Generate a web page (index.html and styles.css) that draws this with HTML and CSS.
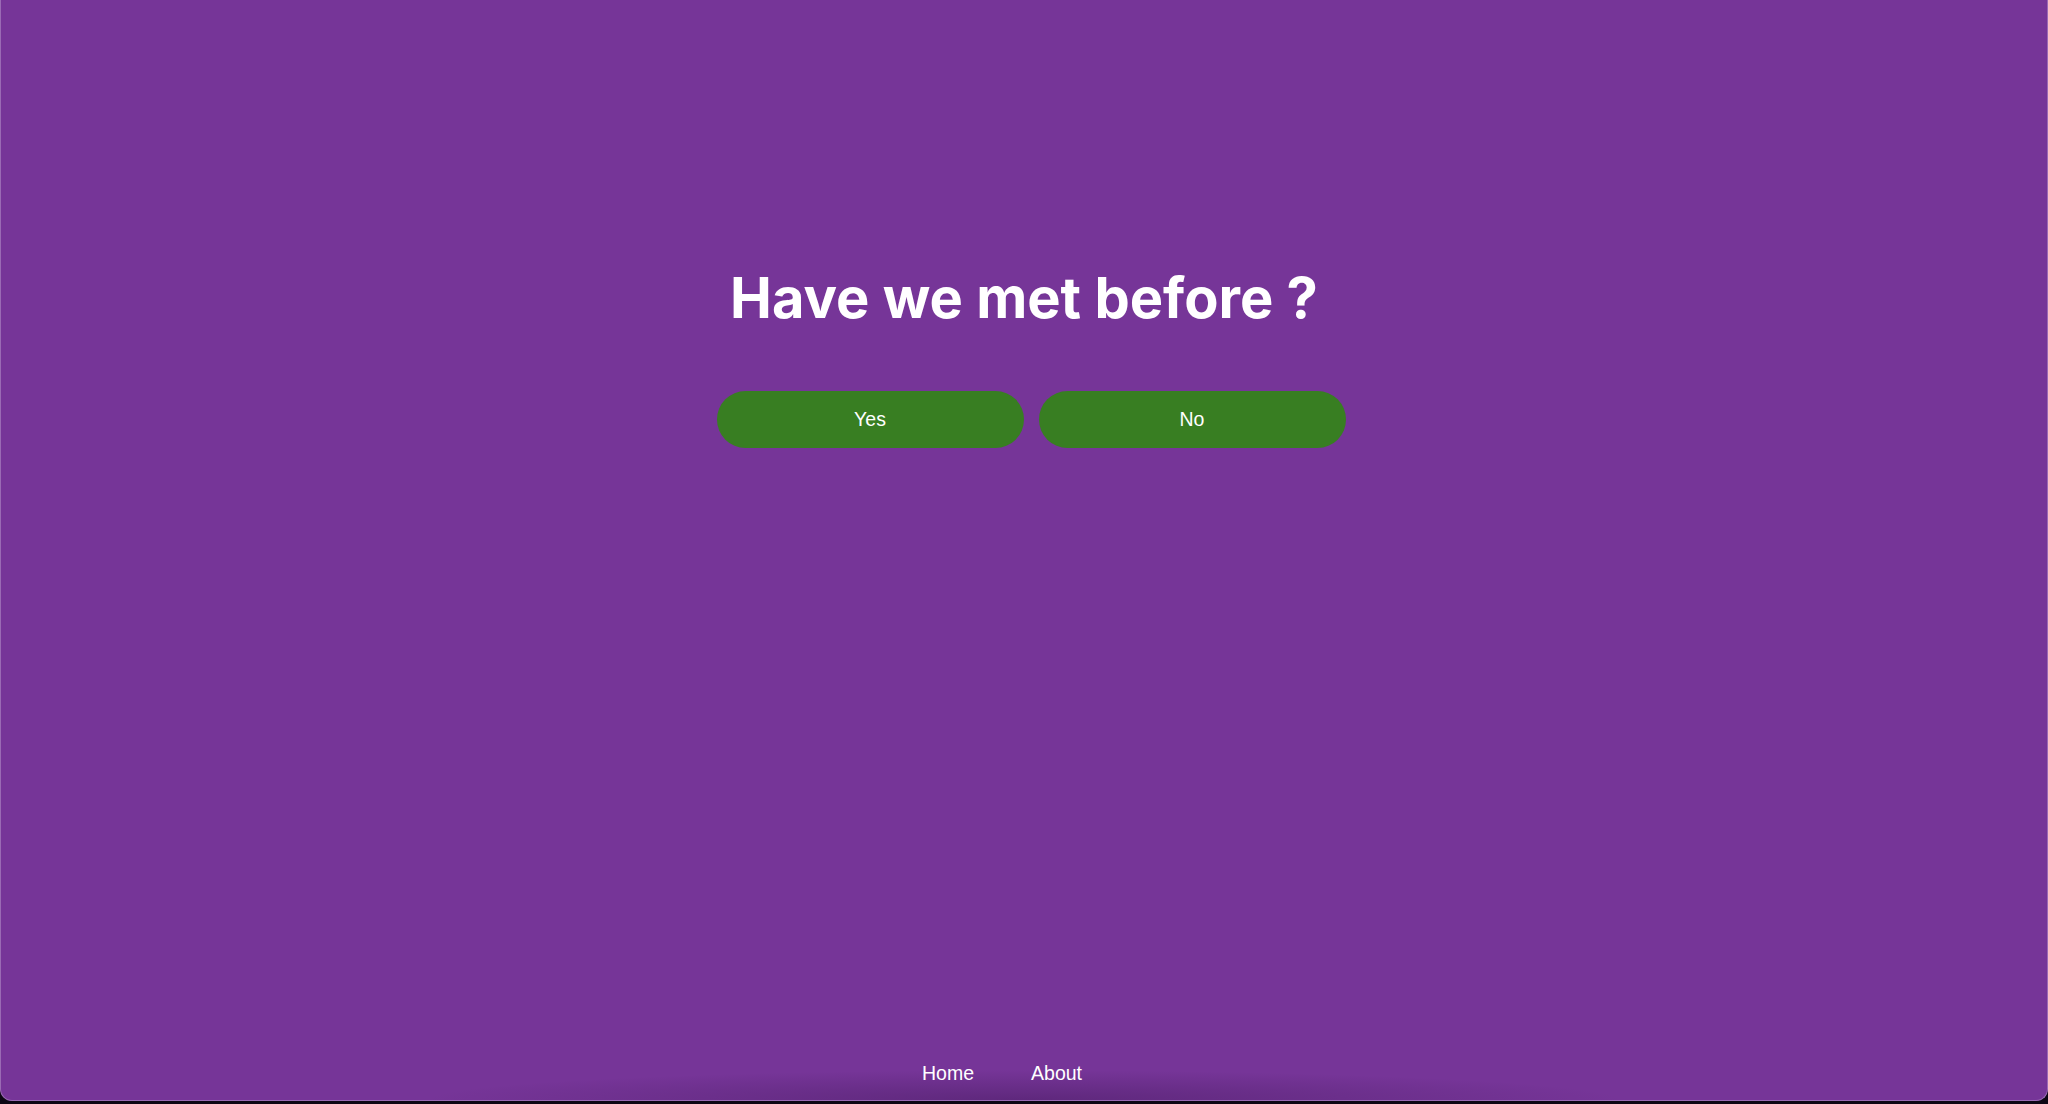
FILE: index.html
```html
<!DOCTYPE html>
<html lang="en">
<head>
<meta charset="utf-8">
<title>Have we met before ?</title>
<link rel="stylesheet" href="styles.css">
</head>
<body>
<div class="window">
  <main class="main">
    <h1 class="title">Have we met before ?</h1>
    <div class="actions">
      <button class="btn">Yes</button>
      <button class="btn">No</button>
    </div>
  </main>
  <footer class="footer">
    <nav class="nav">
      <a class="nav-link" href="#">Home</a>
      <a class="nav-link" href="#">About</a>
    </nav>
  </footer>
</div>
</body>
</html>
```

FILE: styles.css
```css
html, body {
  margin: 0;
  padding: 0;
  height: 100%;
  background: #0d0614;
}

body {
  overflow: hidden;
}

.window {
  box-sizing: border-box;
  height: 1101px;
  background: #763598;
  border-left: 1px solid #9a6ab4;
  border-right: 1px solid #9a6ab4;
  border-bottom: 1px solid #9a6ab4;
  border-radius: 0 0 12px 12px;
  display: flex;
  flex-direction: column;
  overflow: hidden;
}

.main {
  flex: 1;
  display: flex;
  flex-direction: column;
  align-items: center;
  padding-top: 264px;
}

.title {
  margin: 0;
  font-family: Inter, "Noto Sans", sans-serif;
  font-weight: 700;
  font-size: 56px;
  line-height: 68px;
  color: #ffffff;
  letter-spacing: 0;
}

.actions {
  display: flex;
  gap: 15px;
  margin-top: 59px;
  margin-left: 14px;
}

.btn {
  width: 307px;
  height: 57px;
  border: none;
  border-radius: 29px;
  background: #387e22;
  color: #ffffff;
  font-family: "Liberation Sans", Arial, sans-serif;
  font-size: 19.5px;
  padding: 0;
  cursor: pointer;
}

.footer {
  display: flex;
  justify-content: center;
  padding-bottom: 15px;
  background: radial-gradient(ellipse 600px 30px at 50% 100%, rgba(40, 10, 60, 0.3), rgba(40, 10, 60, 0) 100%);
}

.nav {
  display: flex;
  gap: 57px;
  padding-right: 44px;
}

.nav-link {
  font-family: "Liberation Sans", Arial, sans-serif;
  font-size: 19.5px;
  color: #ffffff;
  text-decoration: none;
}
```
